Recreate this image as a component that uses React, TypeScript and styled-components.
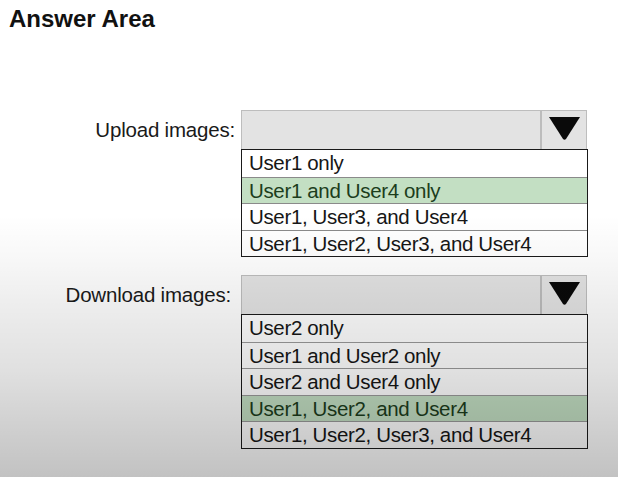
import React from "react";
import styled, { createGlobalStyle } from "styled-components";

const GlobalStyle = createGlobalStyle`
  html, body {
    margin: 0;
    padding: 0;
    background: #ffffff;
  }
  body {
    font-family: "Liberation Sans", Arial, sans-serif;
    color: #111;
  }
`;

const Page = styled.div`
  position: relative;
  width: 618px;
  height: 477px;
  overflow: hidden;
  padding: 5px 0 0 9px;
  box-sizing: border-box;
`;

const Shade = styled.div`
  position: absolute;
  inset: 0;
  z-index: 2;
  pointer-events: none;
  background: linear-gradient(
    to bottom,
    rgba(0, 0, 0, 0) 0px,
    rgba(0, 0, 0, 0) 215px,
    rgba(0, 0, 0, 0.03) 260px,
    rgba(0, 0, 0, 0.07) 305px,
    rgba(0, 0, 0, 0.12) 370px,
    rgba(0, 0, 0, 0.2) 440px,
    rgba(0, 0, 0, 0.24) 477px
  );
`;

const Title = styled.h1`
  margin: 0;
  font-size: 24px;
  line-height: 28px;
  font-weight: bold;
  color: #111;
`;

const Form = styled.div`
  display: flex;
  flex-direction: column;
  gap: 18px;
  margin-top: 77px;
`;

const Row = styled.div`
  display: flex;
  align-items: flex-start;
`;

const Label = styled.div<{ $shift: number }>`
  width: ${(p) => 226 - p.$shift}px;
  padding-right: ${(p) => 6 + p.$shift}px;
  text-align: right;
  font-size: 20.5px;
  line-height: 39px;
  color: #1a1a1a;
  letter-spacing: -0.2px;
`;

const Select = styled.div`
  display: flex;
  flex-direction: column;
  width: 347px;
`;

const Header = styled.div`
  display: flex;
  height: 39px;
  box-sizing: border-box;
  border: 1px solid #bdbdbd;
  border-bottom: none;
  background: #e3e3e3;
  margin-right: 1px;
`;

const Field = styled.div`
  flex: 1;
`;

const Arrow = styled.div`
  width: 46px;
  border-left: 2px solid #bcbcbc;
  display: flex;
  align-items: center;
  justify-content: center;
  padding-bottom: 4px;
  box-sizing: border-box;
`;

const List = styled.div`
  display: flex;
  flex-direction: column;
  border: 1.5px solid #1a1a1a;
  background: #ffffff;
`;

const Option = styled.div<{ $selected?: boolean; $line: string }>`
  height: 26.5px;
  box-sizing: border-box;
  padding-left: 7px;
  font-size: 20.5px;
  line-height: 26px;
  white-space: nowrap;
  letter-spacing: -0.35px;
  color: ${(p) => (p.$selected ? "#1c3d1c" : "#161616")};
  background: ${(p) => (p.$selected ? "#c3dfc3" : "transparent")};
  border-top: 1px solid ${(p) => p.$line};
  &:first-child {
    border-top: none;
  }
`;

type DropdownProps = {
  label: string;
  shift: number;
  options: string[];
  selected: number;
  line: string;
};

const Triangle = () => (
  <svg width="31" height="23" viewBox="0 0 31 23">
    <path d="M0 0 L31 0 L17 22 Q15.5 23.5 14 22 Z" fill="#0a0a0a" />
  </svg>
);

const Dropdown = ({ label, shift, options, selected, line }: DropdownProps) => (
  <Row>
    <Label $shift={shift}>{label}</Label>
    <Select>
      <Header>
        <Field />
        <Arrow>
          <Triangle />
        </Arrow>
      </Header>
      <List>
        {options.map((o, i) => (
          <Option key={o} $selected={i === selected} $line={line}>
            {o}
          </Option>
        ))}
      </List>
    </Select>
  </Row>
);

export default function App() {
  return (
    <>
      <GlobalStyle />
      <Page>
        <Shade />
        <Title>Answer Area</Title>
        <Form>
          <Dropdown
            label="Upload images:"
            shift={0}
            line="#8a8a8a"
            selected={1}
            options={[
              "User1 only",
              "User1 and User4 only",
              "User1, User3, and User4",
              "User1, User2, User3, and User4",
            ]}
          />
          <Dropdown
            label="Download images:"
            shift={4}
            line="#9a9a9a"
            selected={3}
            options={[
              "User2 only",
              "User1 and User2 only",
              "User2 and User4 only",
              "User1, User2, and User4",
              "User1, User2, User3, and User4",
            ]}
          />
        </Form>
      </Page>
    </>
  );
}
